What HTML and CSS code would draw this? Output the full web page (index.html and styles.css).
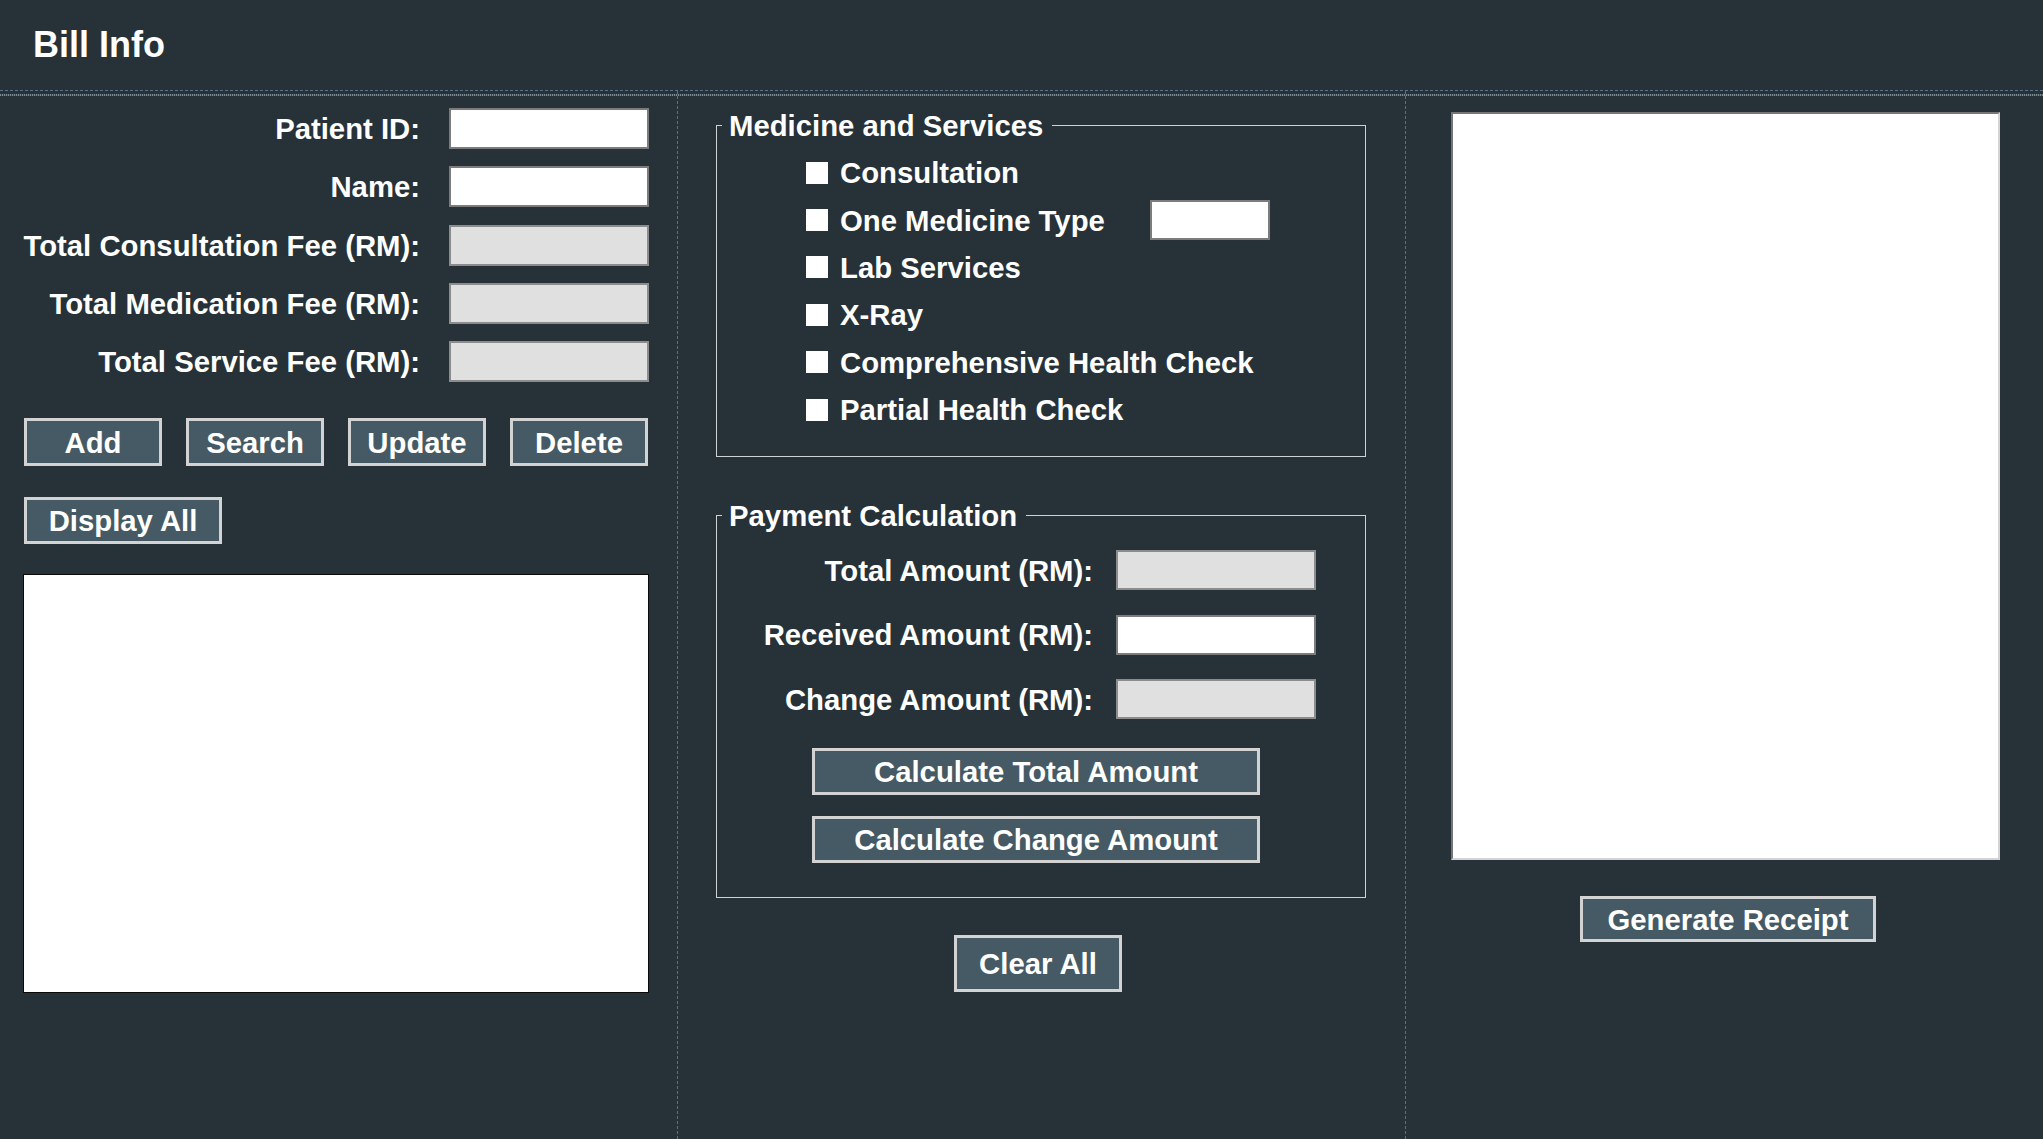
FILE: index.html
```html
<!DOCTYPE html>
<html lang="en">
<head>
<meta charset="utf-8">
<title>Bill Info</title>
<link rel="stylesheet" href="styles.css">
</head>
<body>
<header class="topbar">Bill Info</header>
<main class="main">
  <section class="col col-left">
    <div class="form-grid">
      <label class="lbl">Patient ID:</label><input class="field" type="text">
      <label class="lbl">Name:</label><input class="field" type="text">
      <label class="lbl">Total Consultation Fee (RM):</label><input class="field field-off" type="text" disabled>
      <label class="lbl">Total Medication Fee (RM):</label><input class="field field-off" type="text" disabled>
      <label class="lbl">Total Service Fee (RM):</label><input class="field field-off" type="text" disabled>
    </div>
    <div class="btn-row">
      <button class="btn btn-sm">Add</button>
      <button class="btn btn-sm">Search</button>
      <button class="btn btn-sm">Update</button>
      <button class="btn btn-sm">Delete</button>
    </div>
    <button class="btn btn-display">Display All</button>
    <textarea class="list-area"></textarea>
  </section>

  <section class="col col-mid">
    <fieldset class="group group-med">
      <legend class="legend">Medicine and Services</legend>
      <div class="check-row"><input class="chk" type="checkbox"><span class="chk-text">Consultation</span></div>
      <div class="check-row"><input class="chk" type="checkbox"><span class="chk-text chk-wide">One Medicine Type</span><input class="field field-qty" type="text"></div>
      <div class="check-row"><input class="chk" type="checkbox"><span class="chk-text">Lab Services</span></div>
      <div class="check-row"><input class="chk" type="checkbox"><span class="chk-text">X-Ray</span></div>
      <div class="check-row"><input class="chk" type="checkbox"><span class="chk-text">Comprehensive Health Check</span></div>
      <div class="check-row"><input class="chk" type="checkbox"><span class="chk-text">Partial Health Check</span></div>
    </fieldset>

    <fieldset class="group group-pay">
      <legend class="legend">Payment Calculation</legend>
      <div class="pay-grid">
        <label class="lbl">Total Amount (RM):</label><input class="field field-pay field-off" type="text" disabled>
        <label class="lbl">Received Amount (RM):</label><input class="field field-pay" type="text">
        <label class="lbl">Change Amount (RM):</label><input class="field field-pay field-off" type="text" disabled>
      </div>
      <button class="btn btn-calc btn-calc-total">Calculate Total Amount</button>
      <button class="btn btn-calc btn-calc-change">Calculate Change Amount</button>
    </fieldset>

    <button class="btn btn-clear">Clear All</button>
  </section>

  <section class="col col-right">
    <textarea class="receipt"></textarea>
    <button class="btn btn-receipt">Generate Receipt</button>
  </section>
</main>
</body>
</html>
```

FILE: styles.css
```css
* {
  box-sizing: border-box;
}

html, body {
  margin: 0;
  padding: 0;
}

body {
  background: #263238;
  color: #ffffff;
  font-family: "Liberation Sans", Arial, sans-serif;
  font-weight: bold;
  font-size: 29.3px;
  line-height: 33px;
  width: 2043px;
  height: 1139px;
  overflow: hidden;
}

.topbar {
  height: 91px;
  padding: 27px 0 0 33px;
  font-size: 36px;
  line-height: 36px;
  border-bottom: 1px dashed #56738a;
}

.main {
  display: grid;
  grid-template-columns: 678px 728px 1fr;
  height: 1048px;
  background-image: repeating-linear-gradient(90deg, #7b8990 0 1px, #3a4950 1px 2px);
  background-size: 100% 2px;
  background-position: 0 3px;
  background-repeat: no-repeat;
}

.col {
  display: flex;
  flex-direction: column;
  align-items: flex-start;
}

.col-left,
.col-mid {
  border-right: 1px dashed #56738a;
}

/* ---------- left column ---------- */
.col-left {
  padding-top: 17px;
}

.form-grid {
  display: grid;
  grid-template-columns: 420px 200px;
  column-gap: 29px;
  row-gap: 17.25px;
  align-items: center;
}

.lbl {
  text-align: right;
  white-space: nowrap;
}

.field {
  height: 41px;
  width: 200px;
  margin: 0;
  padding: 0 6px;
  background: #ffffff;
  border: 2px solid #7c7c7c;
  font: inherit;
  outline: none;
}

.field-off {
  background: #e0e0e0;
  border-color: #8c8c8c;
}

.btn {
  margin: 0;
  padding: 0;
  background: #455a64;
  color: #ffffff;
  border: 3px solid #d3d3d3;
  font: inherit;
  line-height: 33px;
  cursor: pointer;
}

.btn-row {
  display: flex;
  gap: 24px;
  margin: 36px 0 0 24px;
}

.btn-sm {
  width: 138px;
  height: 48px;
}

.btn-display {
  width: 198px;
  height: 47px;
  margin: 31px 0 0 24px;
}

.list-area {
  width: 626px;
  height: 419px;
  margin: 30px 0 0 23px;
  background: #ffffff;
  border: 1px solid #0a0a0a;
  resize: none;
  outline: none;
}

/* ---------- middle column ---------- */
.col-mid {
  padding-top: 18px;
}

.group {
  width: 650px;
  margin: 0 0 0 38px;
  padding: 0;
  border: 1px solid #cfd2d3;
  min-width: 0;
}

.legend {
  margin-left: 5px;
  padding: 0 9px 0 7px;
  line-height: 33px;
}

.group-med {
  padding: 7px 0 23px 0;
}

.check-row {
  display: flex;
  align-items: center;
  height: 47.4px;
  padding-left: 89px;
}

.chk {
  appearance: none;
  -webkit-appearance: none;
  width: 22px;
  height: 22px;
  margin: 0 12px 0 0;
  background: #ffffff;
  border: 0;
  flex: none;
}

.chk-wide {
  min-width: 310px;
}

.field-qty {
  width: 120px;
  height: 40px;
}

.group-pay {
  margin-top: 42px;
  padding: 18px 0 34px 0;
}

.pay-grid {
  display: grid;
  grid-template-columns: 376px 200px;
  column-gap: 23px;
  row-gap: 24.5px;
  align-items: center;
}

.field-pay {
  height: 40px;
}

.btn-calc {
  display: block;
  width: 448px;
  height: 47px;
  margin-left: 95px;
}

.btn-calc-total {
  margin-top: 29px;
}

.btn-calc-change {
  margin-top: 21px;
}

.btn-clear {
  width: 168px;
  height: 57px;
  margin: 37px 0 0 276px;
}

/* ---------- right column ---------- */
.col-right {
  padding-top: 21px;
}

.receipt {
  width: 549px;
  height: 748px;
  margin: 0 0 0 45px;
  background: #ffffff;
  border: 2px solid;
  border-color: #767676 #d4d4d4 #d4d4d4 #767676;
  resize: none;
  outline: none;
}

.btn-receipt {
  width: 296px;
  height: 46px;
  margin: 36px 0 0 174px;
}
```
